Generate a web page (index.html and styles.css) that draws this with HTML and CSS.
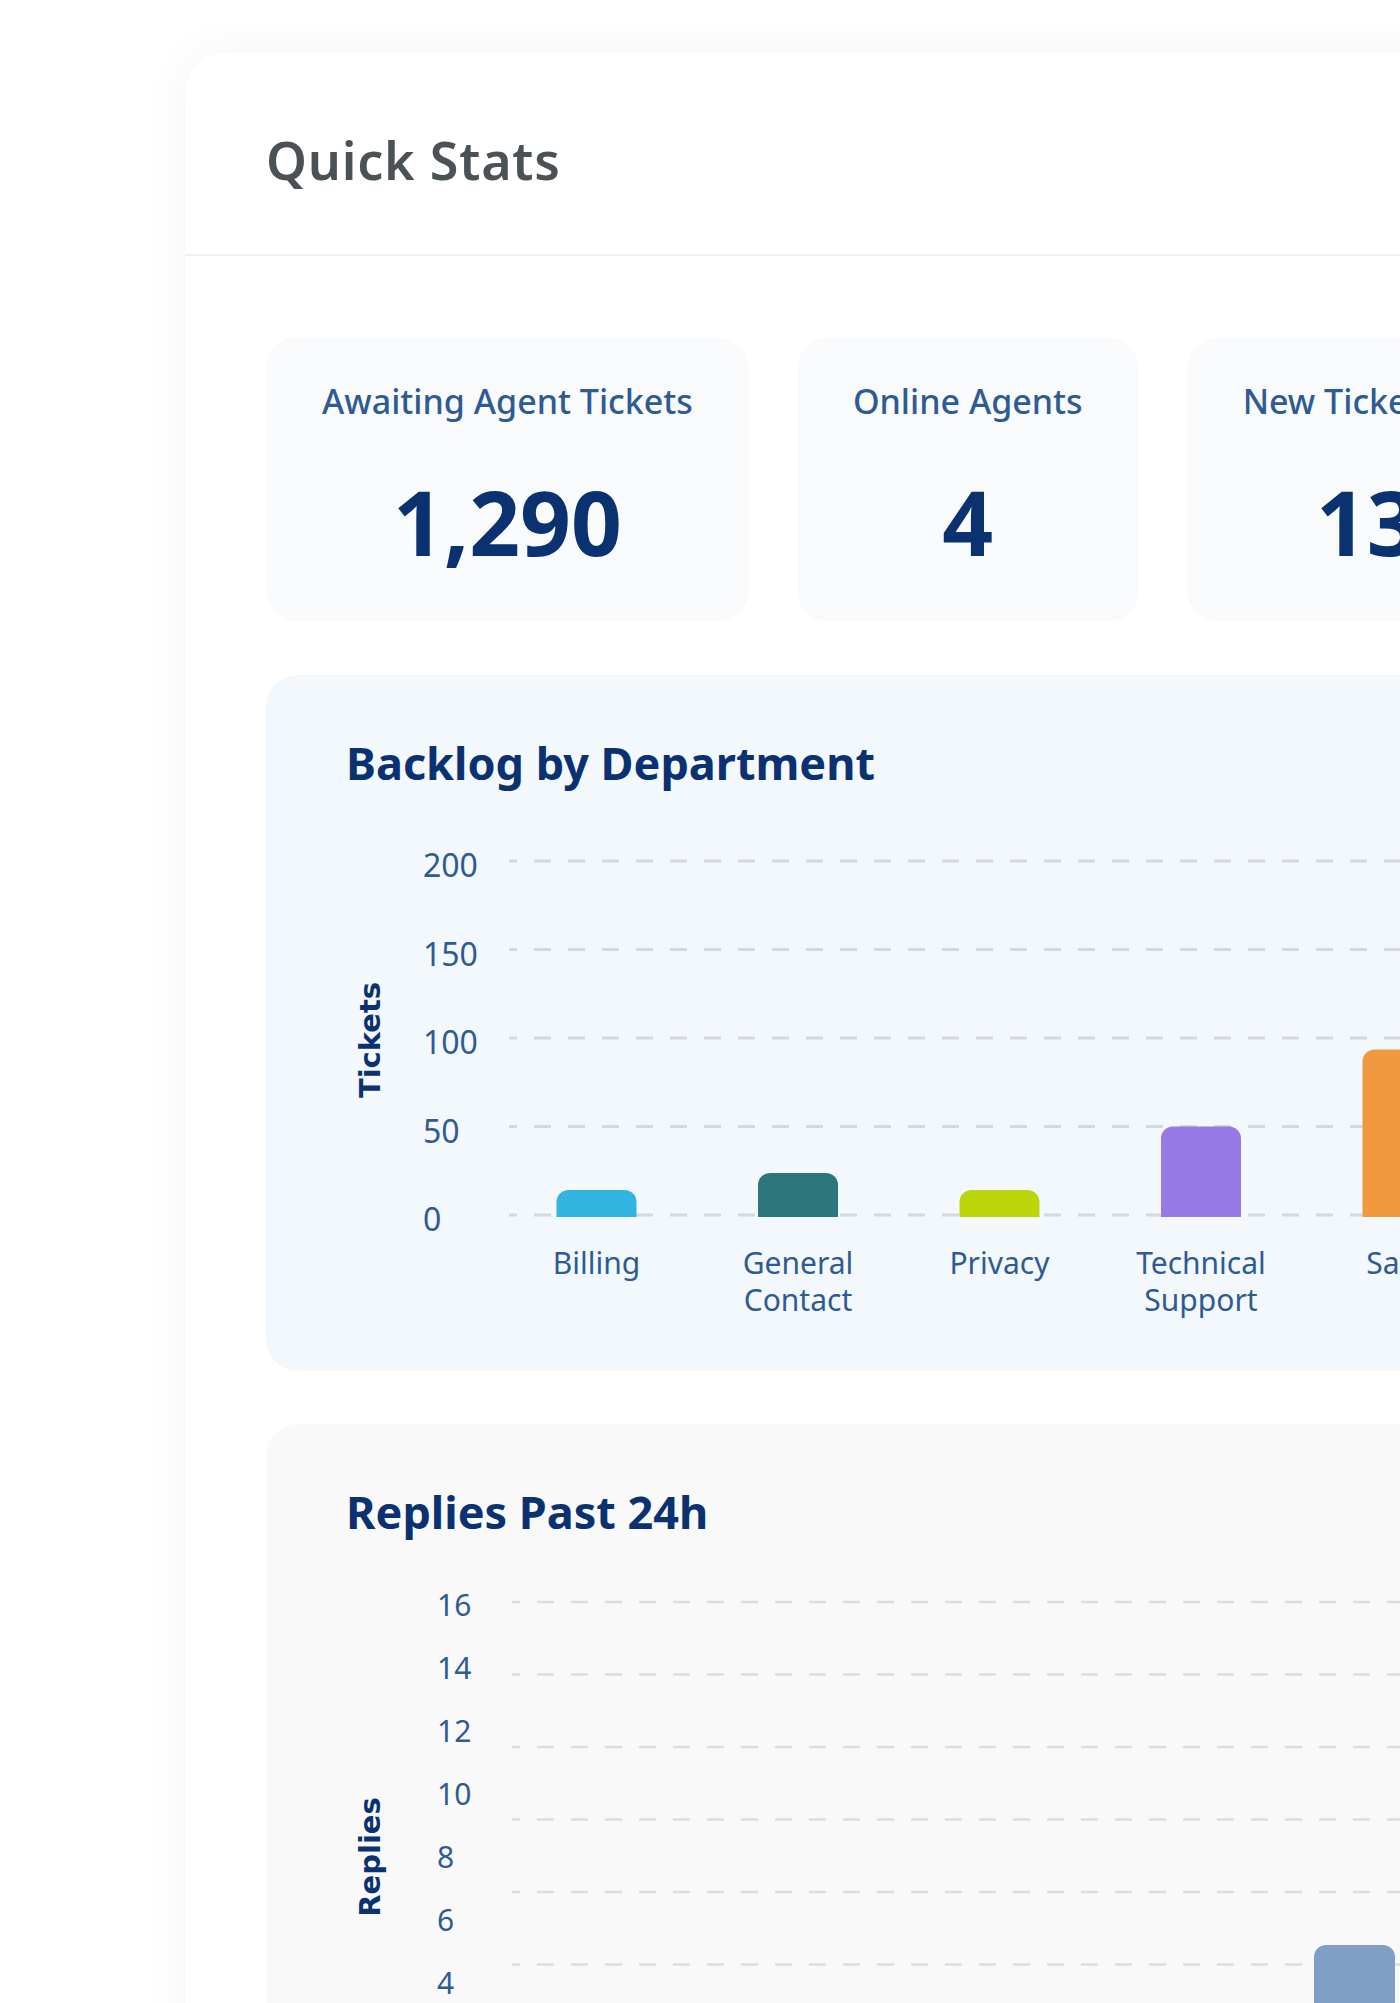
FILE: index.html
```html
<!DOCTYPE html>
<html lang="en">
<head>
    <meta charset="UTF-8">
    <meta name="viewport" content="width=device-width, initial-scale=1.0">
    <title>Quick Stats</title>
    <link rel="stylesheet" href="styles.css">
</head>
<body>
    <div class="page">
        <div class="dashboard">
            <div class="dashboard-header">
                <h2>Quick Stats</h2>
            </div>
            <div class="dashboard-body">
                <div class="stats-row">
                    <div class="stat-card">
                        <div class="stat-label">Awaiting Agent Tickets</div>
                        <div class="stat-value">1,290</div>
                    </div>
                    <div class="stat-card">
                        <div class="stat-label">Online Agents</div>
                        <div class="stat-value">4</div>
                    </div>
                    <div class="stat-card">
                        <div class="stat-label">New Tickets Today</div>
                        <div class="stat-value">136</div>
                    </div>
                </div>

                <div class="chart-panel chart-panel-blue">
                    <h3 class="chart-title">Backlog by Department</h3>
                    <svg class="chart" width="1300" height="582" viewBox="0 0 1300 582">
                        <!-- grid -->
                        <g class="grid">
                            <line x1="243" y1="72" x2="1300" y2="72"/>
                            <line x1="243" y1="160.5" x2="1300" y2="160.5"/>
                            <line x1="243" y1="249" x2="1300" y2="249"/>
                            <line x1="243" y1="337.5" x2="1300" y2="337.5"/>
                            <line x1="243" y1="426" x2="1300" y2="426"/>
                        </g>
                        <g class="tick">
                            <text x="157" y="88">200</text>
                            <text x="157" y="176.5">150</text>
                            <text x="157" y="265">100</text>
                            <text x="157" y="353.5">50</text>
                            <text x="157" y="442">0</text>
                        </g>
                        <text class="axis-title" transform="translate(104 251) rotate(-90)">Tickets</text>
                        <!-- bars -->
                        <path fill="#31b4e0" d="M290.5 428 V413 A12 12 0 0 1 302.5 401 H358.5 A12 12 0 0 1 370.5 413 V428 Z"/>
                        <path fill="#2c777b" d="M492 428 V396 A12 12 0 0 1 504 384 H560 A12 12 0 0 1 572 396 V428 Z"/>
                        <path fill="#bcd60b" d="M693.5 428 V413 A12 12 0 0 1 705.5 401 H761.5 A12 12 0 0 1 773.5 413 V428 Z"/>
                        <path fill="#9679e3" d="M895 428 V349.5 A12 12 0 0 1 907 337.5 H963 A12 12 0 0 1 975 349.5 V428 Z"/>
                        <path fill="#f0993f" d="M1096.5 428 V272.5 A12 12 0 0 1 1108.5 260.5 H1164.5 A12 12 0 0 1 1176.5 272.5 V428 Z"/>
                        <g class="category">
                            <text x="330.5" y="485">Billing</text>
                            <text x="532" y="485">General</text>
                            <text x="532" y="522">Contact</text>
                            <text x="733.5" y="485">Privacy</text>
                            <text x="935" y="485">Technical</text>
                            <text x="935" y="522">Support</text>
                            <text x="1136.5" y="485">Sales</text>
                        </g>
                    </svg>
                </div>

                <div class="chart-panel chart-panel-grey">
                    <h3 class="chart-title">Replies Past 24h</h3>
                    <svg class="chart" width="1300" height="560" viewBox="0 0 1300 560">
                        <g class="grid grid-light">
                            <line x1="246" y1="64" x2="1300" y2="64"/>
                            <line x1="246" y1="136.5" x2="1300" y2="136.5"/>
                            <line x1="246" y1="209" x2="1300" y2="209"/>
                            <line x1="246" y1="281.5" x2="1300" y2="281.5"/>
                            <line x1="246" y1="354" x2="1300" y2="354"/>
                            <line x1="246" y1="426.5" x2="1300" y2="426.5"/>
                            <line x1="246" y1="499" x2="1300" y2="499"/>
                        </g>
                        <g class="tick tick-small">
                            <text x="171" y="78">16</text>
                            <text x="171" y="141">14</text>
                            <text x="171" y="204">12</text>
                            <text x="171" y="267">10</text>
                            <text x="171" y="330">8</text>
                            <text x="171" y="393">6</text>
                            <text x="171" y="456">4</text>
                            <text x="171" y="519">2</text>
                        </g>
                        <text class="axis-title" transform="translate(104 319) rotate(-90)">Replies</text>
                        <path fill="#7f9fc6" d="M1048 560 V419 A12 12 0 0 1 1060 407 H1117 A12 12 0 0 1 1129 419 V560 Z"/>
                    </svg>
                </div>
            </div>
        </div>
    </div>
</body>
</html>
```

FILE: styles.css
```css
html, body {
    overflow: hidden;
}
body {
    margin: 0;
    background-color: #fff;
    font-family: "Noto Sans", "Open Sans", sans-serif;
}
.page {
    padding: 53px 0 0 185px;
}
.dashboard {
    width: 1640px;
    min-height: 2100px;
    background-color: #fff;
    border-radius: 40px 0 0 0;
    box-shadow: 0 0 45px rgba(0, 0, 0, 0.05);
}
.dashboard-header {
    padding: 76px 81px 63px;
    border-bottom: 2px solid #eef0f1;
}
.dashboard-header h2 {
    margin: 0;
    font-size: 52px;
    line-height: 62px;
    font-weight: 600;
    letter-spacing: 0.8px;
    color: #4b5256;
}
.dashboard-body {
    padding: 81px 81px 0;
}

/* stat tiles */
.stats-row {
    display: flex;
    gap: 48px;
    margin-bottom: 53px;
}
.stat-card {
    flex-shrink: 0;
    background-color: #f9fafc;
    border-radius: 32px;
    padding: 40px 56px 48px;
    text-align: center;
}
.stat-label {
    font-size: 34px;
    line-height: 48px;
    font-weight: 500;
    color: #2f5b93;
    white-space: nowrap;
}
.stat-value {
    margin-top: 45px;
    font-size: 89px;
    line-height: 104px;
    font-weight: 700;
    color: #0b3270;
}

/* chart panels */
.chart-panel {
    border-radius: 32px;
    padding: 62px 0 0 80px;
    margin-bottom: 53px;
}
.chart-panel-blue {
    background-color: #f3f8fd;
}
.chart-panel-grey {
    background-color: #f9f9fa;
}
.chart-title {
    margin: 0;
    font-size: 45px;
    line-height: 52px;
    font-weight: 700;
    color: #0b3270;
}
.chart {
    display: block;
    margin-left: -80px;
}
.grid line {
    stroke: #d5d8dc;
    stroke-width: 3;
    stroke-dasharray: 17 17;
    stroke-dashoffset: 9;
}
.grid-light line {
    stroke: #dcdddf;
    stroke-width: 2.5;
}
.tick text {
    font-family: "Noto Sans", sans-serif;
    font-size: 32px;
    fill: #2f5b93;
}
.tick-small text {
    font-size: 30px;
}
.category text {
    font-family: "Noto Sans", sans-serif;
    font-size: 30px;
    fill: #2f5b93;
    text-anchor: middle;
}
.axis-title {
    font-family: "DejaVu Sans", sans-serif;
    font-size: 29px;
    font-weight: 700;
    fill: #0b3270;
    text-anchor: middle;
    dominant-baseline: central;
}
```
